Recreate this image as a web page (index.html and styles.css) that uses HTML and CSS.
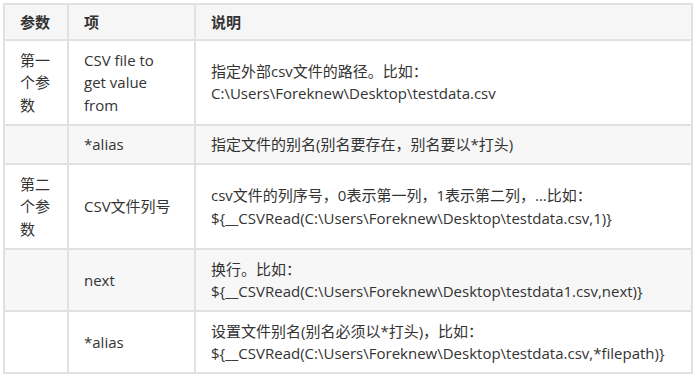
FILE: index.html
```html
<!DOCTYPE html>
<html lang="zh">
<head>
<meta charset="utf-8">
<link rel="stylesheet" href="styles.css">
</head>
<body>
<table class="params">
  <colgroup>
    <col class="c1">
    <col class="c2">
    <col class="c3">
  </colgroup>
  <thead>
    <tr><th>参数</th><th>项</th><th>说明</th></tr>
  </thead>
  <tbody>
    <tr>
      <td>第一个参数</td>
      <td>CSV file to get value from</td>
      <td>指定外部csv文件的路径。比如：<br>C:\Users\Foreknew\Desktop\testdata.csv</td>
    </tr>
    <tr class="alt">
      <td></td>
      <td>*alias</td>
      <td>指定文件的别名(别名要存在，别名要以*打头)</td>
    </tr>
    <tr>
      <td>第二个参数</td>
      <td>CSV文件列号</td>
      <td>csv文件的列序号，0表示第一列，1表示第二列，...比如：<br>${__CSVRead(C:\Users\Foreknew\Desktop\testdata.csv,1)}</td>
    </tr>
    <tr class="alt">
      <td></td>
      <td>next</td>
      <td>换行。比如：<br>${__CSVRead(C:\Users\Foreknew\Desktop\testdata1.csv,next)}</td>
    </tr>
    <tr>
      <td></td>
      <td>*alias</td>
      <td>设置文件别名(别名必须以*打头)，比如：<br>${__CSVRead(C:\Users\Foreknew\Desktop\testdata.csv,*filepath)}</td>
    </tr>
  </tbody>
</table>
</body>
</html>
```

FILE: styles.css
```css
html, body {
  margin: 0;
  padding: 0;
  background: #ffffff;
}

body {
  padding: 3px;
  font-family: "Open Sans", "Noto Sans CJK SC", sans-serif;
  font-size: 15px;
  color: #333333;
}

.params {
  border-collapse: collapse;
  table-layout: fixed;
  width: 690px;
  border: 2px solid #dfe2e5;
}

.params .c1 { width: 64px; }
.params .c2 { width: 127px; }
.params .c3 { width: auto; }

.params th,
.params td {
  border: 2px solid #dfe2e5;
  padding: 7.6px 15px;
  line-height: 22.5px;
  text-align: left;
  vertical-align: middle;
  word-wrap: break-word;
}

.params th {
  padding-top: 5.75px;
  padding-bottom: 5.75px;
  font-weight: bold;
  background: #f6f6f6;
}

.params tr.alt td {
  background: #f7f7f7;
}
```
